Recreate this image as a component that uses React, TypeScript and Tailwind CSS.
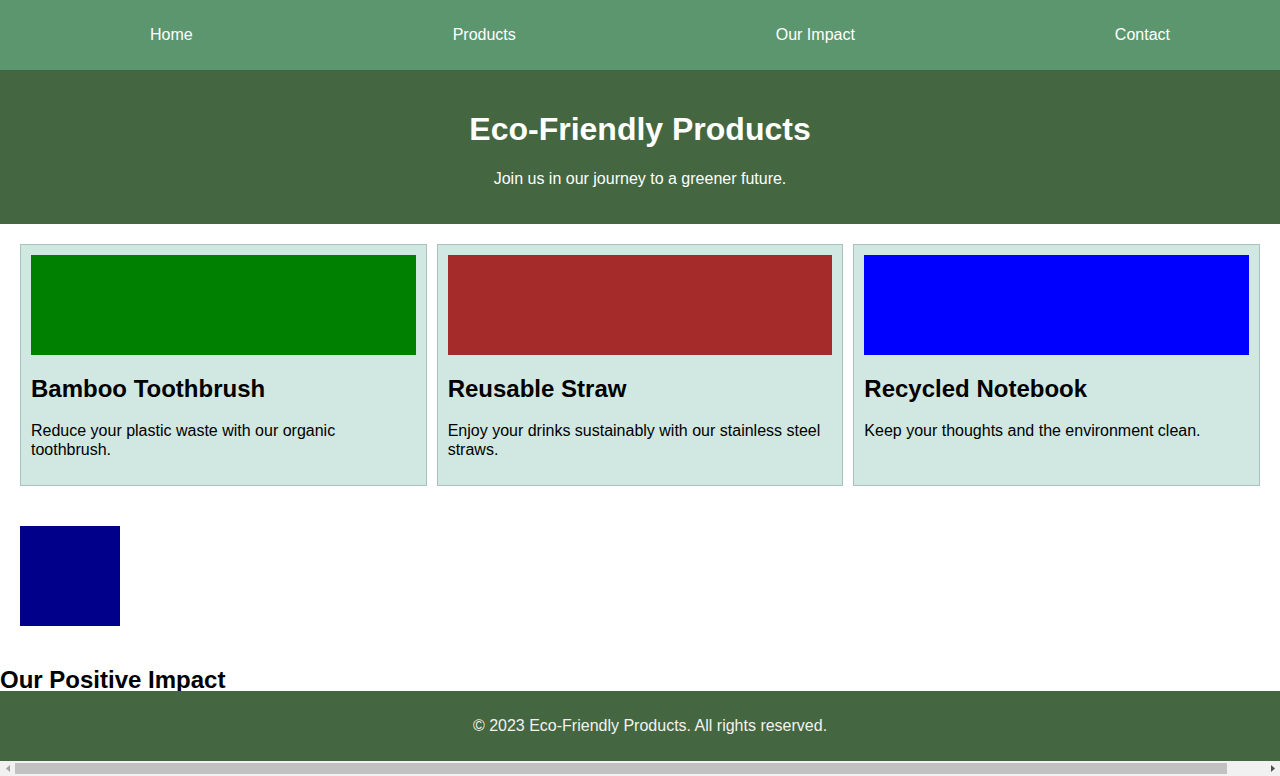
import React from "react";

const products = [
  {
    title: "Bamboo Toothbrush",
    text: "Reduce your plastic waste with our organic toothbrush.",
    color: "bg-[#008000]",
  },
  {
    title: "Reusable Straw",
    text: "Enjoy your drinks sustainably with our stainless steel straws.",
    color: "bg-[#a52a2a]",
  },
  {
    title: "Recycled Notebook",
    text: "Keep your thoughts and the environment clean.",
    color: "bg-[#0000ff]",
  },
];

export default function App() {
  return (
    <div className="h-[776px] flex flex-col font-['Liberation_Sans',Arial,sans-serif] text-black bg-white overflow-hidden">
      <div className="relative flex-1 min-h-0 overflow-hidden">
        <nav className="box-content w-full px-5 h-[70px] bg-[#5c966e] flex items-center justify-around">
          {["Home", "Products", "Our Impact", "Contact"].map((l) => (
            <a key={l} href="#" className="text-white text-base leading-[18.4px]">
              {l}
            </a>
          ))}
        </nav>

        <header className="bg-[#446640] p-5 text-center text-white">
          <h1 className="text-[32px] leading-[36.8px] font-bold my-[21.44px]">Eco-Friendly Products</h1>
          <p className="text-base leading-[18.4px] my-4">Join us in our journey to a greener future.</p>
        </header>

        <section className="p-5 grid grid-cols-3 gap-[10px]">
          {products.map((p) => (
            <div key={p.title} className="bg-[#d1e7e1] border border-[#a9c2bc] p-[10px]">
              <div className={`${p.color} h-[100px] w-full`} />
              <h2 className="text-2xl leading-[27.6px] font-bold mt-[19.92px] mb-[19.92px]">{p.title}</h2>
              <p className="text-base leading-[18.4px] mb-4">{p.text}</p>
            </div>
          ))}
        </section>

        <section className="p-5">
          <div className="w-[100px] h-[100px] bg-[#00008b]" />
        </section>

        <section>
          <h2 className="text-2xl leading-[27.6px] font-bold my-[19.92px]">Our Positive Impact</h2>
        </section>

        <footer className="absolute bottom-0 left-0 box-content w-full px-[10px] py-[10px] bg-[#446640] text-center text-[#f2f2f2]">
          <p className="text-base leading-[18.4px] my-4">© 2023 Eco-Friendly Products. All rights reserved.</p>
        </footer>
      </div>

      <div className="h-[15px] shrink-0 bg-[#f1f1f1] flex items-center">
        <div className="w-[15px] h-full flex items-center justify-center">
          <svg width="4" height="7" viewBox="0 0 4 7">
            <path d="M4 0 L0 3.5 L4 7 Z" fill="#a3a3a3" />
          </svg>
        </div>
        <div className="w-[1212px] h-[11px] bg-[#c1c1c1]" />
        <div className="flex-1" />
        <div className="w-[15px] h-full flex items-center justify-center">
          <svg width="4" height="7" viewBox="0 0 4 7">
            <path d="M0 0 L4 3.5 L0 7 Z" fill="#505050" />
          </svg>
        </div>
      </div>
    </div>
  );
}
